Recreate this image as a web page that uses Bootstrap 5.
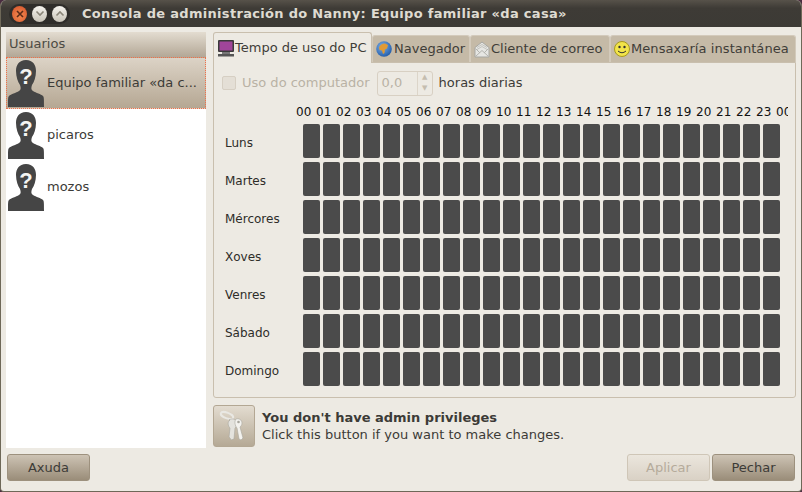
<!DOCTYPE html>
<html lang="gl">
<head>
  <meta charset="UTF-8">
  <title>Consola de administración do Nanny</title>
  <link href="https://cdn.jsdelivr.net/npm/bootstrap@5.3.0/dist/css/bootstrap.min.css" rel="stylesheet">
  <style>
    html, body { width: 802px; height: 492px; overflow: hidden; background: #4a2c40; }
    body { font-family: "DejaVu Sans", sans-serif; font-size: 13px; color: #3c3b37; }
    .win { width: 802px; height: 492px; background: #edeae3; border-radius: 6px 6px 4px 4px; overflow: hidden; border: 1px solid #6e6858; border-top: 0; }
    .titlebar { height: 27px; background: linear-gradient(#57524a, #3e3b36 30%, #3c3a35); padding-left: 9px; gap: 12px; margin: 0 -1px; }
    .wbtns { height: 20px; width: 61px; padding: 0 3px; gap: 5px; background: #2f2d2a; border-radius: 10px; }
    .wbtn { width: 16px; height: 16px; border-radius: 50%; background: linear-gradient(#f5f3ee, #c9c4b8); }
    .wbtn.shut { background: radial-gradient(circle at 50% 60%, #f58a50, #d2512a); }
    .wtitle { font-weight: 700; font-size: 13px; color: #dfdbd2; letter-spacing: .31px; white-space: nowrap; }
    .body-row { padding: 5px 5px 0 5px; gap: 7px; height: 421px; }
    .side { width: 200px; background: #fff; }
    .side-head { height: 25px; padding: 0 3px; line-height: 24px; font-size: 13px; background: linear-gradient(#e3dcd0, #b3a796); color: #4c4a43; }
    .urow { height: 52px; padding-left: 2px; gap: 3px; white-space: nowrap; }
    .urow.picked { background: linear-gradient(#dcd3c6, #b5a793); border: 1px dotted #f0704a; padding-left: 1px; }
    .rightcol { width: 583px; }
    .tabbar { height: 30px; }
    .tabx { height: 27px; margin-top: 3px; padding: 0 0 0 3px; background: #c5baa7; border: 1px solid #d3cabb; border-bottom: 0; border-radius: 3px 3px 0 0; white-space: nowrap; gap: 1px; color: #3f3d38; }
    .tabx.on { height: 31px; margin-top: 0; margin-bottom: -1px; background: #edeae3; border-color: #c9bfae; position: relative; z-index: 1; gap: 0; }
    .t1 { width: 159px; } .t2 { width: 98px; gap: 2px; } .t3 { width: 140px; } .t4 { width: 186px; letter-spacing: .08px; }
    .tabpane { height: 336px; border: 1px solid #c9bfae; border-radius: 0 0 3px 3px; padding: 8px 0 0 5px; }
    .usage { height: 24px; padding-left: 3px; color: #b9b2a5; }
    .fakecheck { width: 14px; height: 14px; border: 1px solid #d6cfc3; border-radius: 2px; background: #e4dfd6; margin-right: 6px; }
    .spinbox { width: 56px; height: 25px; margin: 0 6px 0 7px; border: 1px solid #d8d0c3; border-radius: 3px; padding-left: 4px; }
    .spinarrows { width: 15px; border-left: 1px solid #dcd5c9; font-size: 7px; line-height: 11px; text-align: center; color: #c5bdaf; }
    .darktxt { color: #3c3b37; }
    .hours { margin: 8px 0 3px 77px; width: 492px; height: 18px; overflow: hidden; white-space: nowrap; font-size: 12px; color: #111; line-height: 18px; letter-spacing: .1px; }
    .hr-lbl { display: inline-block; width: 20px; text-align: left; }
    .dayrow { height: 38px; }
    .dayname { width: 84px; padding-left: 6px; font-size: 12px; color: #2e2d29; }
    .slots { gap: 3px; }
    .slot { width: 17px; height: 34px; background: #4b4b4b; border-radius: 2px; }
    .notice { height: 42px; margin-top: 7px; gap: 7px; }
    .keybtn { width: 42px; height: 42px; border: 1px solid #b3a793; border-radius: 3px; background: linear-gradient(#e3dcd0, #b5a995); }
    .notice-txt { font-size: 13px; line-height: 17px; }
    .footbar { padding: 6px 6px 0 6px; }
    .gbtn { width: 83px; height: 27px; padding: 0; font-size: 13px; border: 1px solid #9d917e; border-radius: 3px; background: linear-gradient(#cdc3b4, #9a8d79); color: #3c3b37; }
    .gbtn:disabled { opacity: 1; background: linear-gradient(#ebe6dd, #d9d1c5); border-color: #cfc6b7; color: #b5ab9b; }
    .gap-btn { gap: 2px; }
    .qmark { font-family: "Liberation Sans", sans-serif; font-size: 22px; font-weight: 700; fill: #f4f4f2; }
  </style>
</head>
<body>
  <div class="win">
    <div class="titlebar d-flex align-items-center">
      <div class="wbtns d-flex align-items-center">
        <span class="wbtn shut d-flex align-items-center justify-content-center">
          <svg width="8" height="8" viewBox="0 0 8 8"><path d="M1 1 7 7M7 1 1 7" stroke="#5a2a18" stroke-width="1.6"/></svg>
        </span>
        <span class="wbtn d-flex align-items-center justify-content-center">
          <svg width="10" height="7" viewBox="0 0 10 7"><path d="M1.5 1.5 5 5 8.500 1.500" fill="none" stroke="#8a8578" stroke-width="1.600"/></svg>
        </span>
        <span class="wbtn d-flex align-items-center justify-content-center">
          <svg width="10" height="7" viewBox="0 0 10 7"><path d="M1.5 5.500 5 2 8.500 5.500" fill="none" stroke="#8a8578" stroke-width="1.600"/></svg>
        </span>
      </div>
      <div class="wtitle">Consola de administración do Nanny: Equipo familiar «da casa»</div>
    </div>

    <div class="body-row d-flex">
      <div class="side flex-shrink-0">
        <div class="side-head">Usuarios</div>
        <div class="urow picked d-flex align-items-center">
          <svg width="36" height="47" viewBox="0 0 36 47"><use href="#sil"/><text class="qmark" x="18" y="24" text-anchor="middle">?</text></svg>
          <span>Equipo familiar «da c...</span>
        </div>
        <div class="urow d-flex align-items-center">
          <svg width="36" height="47" viewBox="0 0 36 47"><use href="#sil"/><text class="qmark" x="18" y="24" text-anchor="middle">?</text></svg>
          <span>picaros</span>
        </div>
        <div class="urow d-flex align-items-center">
          <svg width="36" height="47" viewBox="0 0 36 47"><use href="#sil"/><text class="qmark" x="18" y="24" text-anchor="middle">?</text></svg>
          <span>mozos</span>
        </div>
      </div>

      <div class="rightcol d-flex flex-column">
        <div class="tabbar d-flex">
          <div class="tabx on t1 d-flex align-items-center">
            <svg width="18" height="18" viewBox="0 0 18 18"><rect x="1" y="1" width="16" height="12" rx="1" fill="#3a3a3a"/><rect x="2.500" y="2.500" width="13" height="9" fill="#a0459a"/><rect x="5" y="13" width="8" height="2" fill="#777"/><rect x="1" y="15" width="16" height="2.500" fill="#555"/></svg>
            <span>Tempo de uso do PC</span>
          </div>
          <div class="tabx t2 d-flex align-items-center">
            <svg width="16" height="16" viewBox="0 0 16 16"><defs><radialGradient id="sea" cx=".4" cy=".35" r=".7"><stop offset="0" stop-color="#7fb0e6"/><stop offset="1" stop-color="#1f5aa8"/></radialGradient></defs><circle cx="8" cy="8" r="7.800" fill="url(#sea)"/><path d="M3 6.500C4 4 6.500 2.500 9 2.500l3 1.500-1 3.500-2 1-.5 3.500L7 13 6 9.500 3.500 9Z" fill="#e09a35"/></svg>
            <span>Navegador</span>
          </div>
          <div class="tabx t3 d-flex align-items-center">
            <svg width="16" height="17" viewBox="0 0 16 17"><path d="M1 6.500 8 1l7 5.500V16H1Z" fill="#e6e6e3" stroke="#a7a7a2"/><path d="M3 6.500 8 3.500l5 3M3 8.500 8 5.500l5 3" fill="none" stroke="#c3c3be"/><path d="M1.500 15.500 8 9.500l6.500 6M1.500 7.500 6 12M14.500 7.500 10 12" fill="none" stroke="#b3b3ae"/></svg>
            <span>Cliente de correo</span>
          </div>
          <div class="tabx t4 d-flex align-items-center">
            <svg width="16" height="16" viewBox="0 0 16 16"><circle cx="8" cy="8" r="7.500" fill="#f2e44a" stroke="#a89a1e"/><circle cx="5.500" cy="6" r="1.200" fill="#333"/><circle cx="10.500" cy="6" r="1.200" fill="#333"/><path d="M4 10q4 3.500 8 0" fill="none" stroke="#333" stroke-width="1"/></svg>
            <span>Mensaxaría instantánea</span>
          </div>
        </div>

        <div class="tabpane">
          <div class="usage d-flex align-items-center">
            <span class="fakecheck"></span>
            <span>Uso do computador</span>
            <span class="spinbox d-flex justify-content-between align-items-stretch">
              <span class="align-self-center">0,0</span>
              <span class="spinarrows d-flex flex-column justify-content-center"><span>▲</span><span>▼</span></span>
            </span>
            <span class="darktxt">horas diarias</span>
          </div>
          <div class="hours" id="hours"></div>
          <div id="days"></div>
        </div>

        <div class="notice d-flex align-items-center">
          <div class="keybtn d-flex align-items-center justify-content-center">
            <svg width="30" height="32" viewBox="0 0 30 32">
              <ellipse cx="8" cy="5.500" rx="6.500" ry="2.800" transform="rotate(20 8 5.500)" fill="none" stroke="#e9e8e3" stroke-width="2"/>
              <path d="M10 10c3-2 7-1 8 2 1 3-1 5-2 6l-1 11-3 1-1-2-1-1 1-9c-2-2-3-6 0-8Z" fill="#e4e3de" stroke="#a8a69e" stroke-width=".6"/>
              <path d="M17 9c3-1 6 1 6 4 0 2-1 3-2 4l3 11-2 2-2-1-2-11c-2-2-3-7-1-9Z" fill="#f3f2ee" stroke="#a8a69e" stroke-width=".6"/>
              <circle cx="19.500" cy="12" r="1.300" fill="#a8a69e"/>
            </svg>
          </div>
          <div class="notice-txt">
            <div class="fw-bold">You don't have admin privileges</div>
            <div>Click this button if you want to make changes.</div>
          </div>
        </div>
      </div>
    </div>

    <div class="footbar d-flex justify-content-between">
      <button class="btn gbtn" type="button">Axuda</button>
      <div class="d-flex gap-btn">
        <button class="btn gbtn" type="button" disabled>Aplicar</button>
        <button class="btn gbtn" type="button">Pechar</button>
      </div>
    </div>
  </div>

  <svg width="0" height="0" class="d-block">
    <defs>
      <path id="sil" fill="#454545" d="M18 0C11 0 8 5 8 11c0 6 2 11 4 14 1 3 1 5-1 6-3 2-8 3-10 5-1 1-1 3-1 11h36c0-8 0-10-1-11-2-2-7-3-10-5-2-1-2-3-1-6 2-3 4-8 4-14C28 5 25 0 18 0Z"/>
    </defs>
  </svg>

  <script>
    const dayNames = ['Luns', 'Martes', 'Mércores', 'Xoves', 'Venres', 'Sábado', 'Domingo'];

    let hourHtml = '';
    for (let h = 0; h <= 24; h++) {
      hourHtml += `<span class="hr-lbl">${String(h % 24).padStart(2, '0')}</span>`;
    }
    document.getElementById('hours').innerHTML = hourHtml;

    const slots = '<div class="slot"></div>'.repeat(24);
    document.getElementById('days').innerHTML = dayNames.map(d => `
      <div class="dayrow d-flex align-items-start">
        <div class="dayname align-self-center">${d}</div>
        <div class="slots d-flex">${slots}</div>
      </div>`).join('');
  </script>
</body>
</html>
